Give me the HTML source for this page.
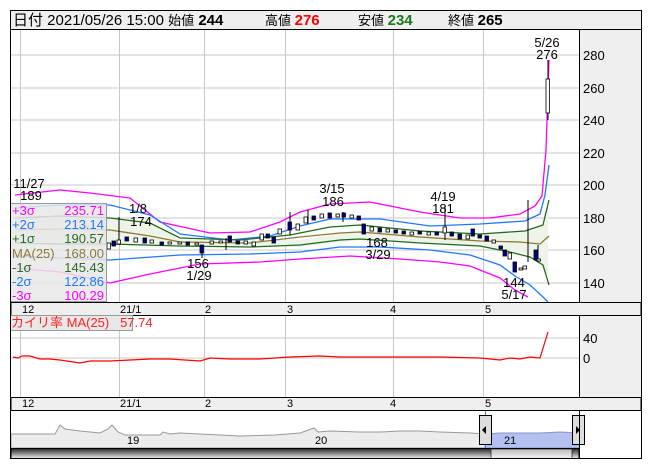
<!DOCTYPE html>
<html><head><meta charset="utf-8"><style>
body{margin:0;width:653px;height:470px;background:#fff;overflow:hidden;font-family:"Liberation Sans","Noto Sans CJK JP",sans-serif}
svg{position:absolute;left:0;top:0}
text{font-family:"Liberation Sans","Noto Sans CJK JP",sans-serif}
</style></head><body>
<svg width="653" height="470" viewBox="0 0 653 470">
<rect x="10.5" y="10.5" width="631" height="19" fill="#efefef" stroke="#000"/>
<text x="13" y="25" font-size="15" fill="#000">日付 2021/05/26 15:00 <tspan font-size="13">始値</tspan> <tspan font-weight="bold">244</tspan></text>
<text x="265" y="25" font-size="13">高値 <tspan font-weight="bold" fill="#f00" font-size="15">276</tspan></text>
<text x="358" y="25" font-size="13">安値 <tspan font-weight="bold" fill="#1a7a1a" font-size="15">234</tspan></text>
<text x="448" y="25" font-size="13">終値 <tspan font-weight="bold" font-size="15">265</tspan></text>
<rect x="579" y="29" width="62" height="381" fill="#efefef"/>
<g stroke="#c8c8c8" stroke-width="1">
<line x1="11" y1="55" x2="579" y2="55"/><line x1="11" y1="88" x2="579" y2="88"/><line x1="11" y1="120" x2="579" y2="120"/><line x1="11" y1="153" x2="579" y2="153"/><line x1="11" y1="185" x2="579" y2="185"/><line x1="11" y1="218" x2="579" y2="218"/><line x1="11" y1="250" x2="579" y2="250"/><line x1="11" y1="283" x2="579" y2="283"/>
<line x1="20.5" y1="30" x2="20.5" y2="302"/><line x1="119.5" y1="30" x2="119.5" y2="302"/><line x1="204.5" y1="30" x2="204.5" y2="302"/><line x1="285.5" y1="30" x2="285.5" y2="302"/><line x1="393.5" y1="30" x2="393.5" y2="302"/><line x1="483.5" y1="30" x2="483.5" y2="302"/>
<line x1="11" y1="338" x2="579" y2="338"/><line x1="11" y1="358" x2="579" y2="358"/>
<line x1="20.5" y1="316" x2="20.5" y2="397"/><line x1="119.5" y1="316" x2="119.5" y2="397"/><line x1="204.5" y1="316" x2="204.5" y2="397"/><line x1="285.5" y1="316" x2="285.5" y2="397"/><line x1="393.5" y1="316" x2="393.5" y2="397"/><line x1="483.5" y1="316" x2="483.5" y2="397"/>
</g>
<path d="M15,222 L60,215 110,218 150,222 180,240 300,240 360,230 420,233 480,235 525,232 545,225 548,205 L548,275 530,255 500,248 420,243 360,240 300,247 180,245 110,243 60,244 15,246Z" fill="#eef4e8"/>
<g fill="none" stroke-width="1.3">
<polyline stroke="#ff00ff" points="15,195 60,190 90,193 130,198 160,222 210,233 250,232 280,222 300,212 330,204 370,202 400,208 420,212 460,218 490,218 520,214 535,206 542,196 546,150 549,60"/>
<polyline stroke="#1e78ff" points="15,208 60,205 110,205 150,215 180,234 230,240 270,236 300,226 330,219 380,219 430,226 480,224 525,221 540,214 545,195 549,165"/>
<polyline stroke="#1f6a1f" points="15,218 60,216 110,218 150,223 180,238 240,240 290,235 330,227 360,225 420,231 480,234 525,231 543,225 549,200"/>
<polyline stroke="#8a7a3a" points="15,230 60,229 110,230 150,236 180,242 250,243 300,237 340,233 360,232 420,237 480,241 520,242 540,244 549,236"/>
<polyline stroke="#1f6a1f" points="15,243 60,244 110,244 180,246 250,247 300,245 340,240 360,239 420,243 480,246 510,252 530,257 543,265 549,285"/>
<polyline stroke="#1e78ff" points="15,256 60,258 110,260 180,255 250,254 300,252 340,247 380,247 430,250 470,255 500,265 515,276 530,285 543,297 548,302"/>
<polyline stroke="#ff00ff" points="15,268 60,272 110,283 150,274 200,264 260,262 300,259 350,256 400,259 440,262 470,266 500,278 515,290 528,297"/>
</g>
<g stroke="#000" stroke-width="1">
<path d="M119,217 V245 M290,212 V235 M226,238 V250 M445,205 V240 M528,200 V262 M308,210 V224 M548,60 V120 M538,245 V262 M343,212 V222 M202,246 V258"/>
</g>
<g stroke="#000" stroke-width="0.8">
<rect x="107" y="243" width="3.5" height="6" fill="#fff"/><rect x="112" y="241" width="3.5" height="5" fill="#00008b"/><rect x="117" y="240" width="3.5" height="4" fill="#fff"/><rect x="125" y="237" width="3.5" height="4" fill="#00008b"/><rect x="134" y="238" width="3.5" height="4" fill="#fff"/><rect x="143" y="238" width="3.5" height="5" fill="#00008b"/><rect x="150" y="240" width="3.5" height="3" fill="#fff"/><rect x="160" y="242" width="3.5" height="3" fill="#00008b"/><rect x="168" y="242" width="3.5" height="2" fill="#fff"/><rect x="178" y="242" width="3.5" height="2" fill="#fff"/><rect x="186" y="242" width="3.5" height="3" fill="#00008b"/><rect x="195" y="243" width="3.5" height="2" fill="#fff"/><rect x="200" y="245" width="3.5" height="8" fill="#00008b"/><rect x="210" y="241" width="3.5" height="3" fill="#fff"/><rect x="219" y="241" width="3.5" height="2" fill="#fff"/><rect x="228" y="236" width="3.5" height="6" fill="#00008b"/><rect x="236" y="241" width="3.5" height="3" fill="#00008b"/><rect x="244" y="241" width="3.5" height="3" fill="#fff"/><rect x="252" y="242" width="3.5" height="4" fill="#fff"/><rect x="260" y="234" width="3.5" height="6" fill="#fff"/><rect x="266" y="234" width="3.5" height="4" fill="#00008b"/><rect x="272" y="237" width="3.5" height="6" fill="#00008b"/><rect x="278" y="229" width="3.5" height="5" fill="#fff"/><rect x="288" y="222" width="3.5" height="8" fill="#00008b"/><rect x="296" y="224" width="3.5" height="6" fill="#fff"/><rect x="304" y="217" width="3.5" height="6" fill="#fff"/><rect x="312" y="216" width="3.5" height="4" fill="#00008b"/><rect x="320" y="214" width="3.5" height="4" fill="#fff"/><rect x="328" y="213" width="3.5" height="5" fill="#00008b"/><rect x="336" y="214" width="3.5" height="3" fill="#fff"/><rect x="342" y="213" width="3.5" height="4" fill="#00008b"/><rect x="350" y="215" width="3.5" height="3" fill="#fff"/><rect x="357" y="216" width="3.5" height="4" fill="#00008b"/><rect x="362" y="224" width="3.5" height="10" fill="#00008b"/><rect x="370" y="227" width="3.5" height="4" fill="#fff"/><rect x="378" y="228" width="3.5" height="4" fill="#00008b"/><rect x="386" y="229" width="3.5" height="3" fill="#fff"/><rect x="394" y="230" width="3.5" height="3" fill="#00008b"/><rect x="402" y="231" width="3.5" height="3" fill="#00008b"/><rect x="410" y="232" width="3.5" height="3" fill="#fff"/><rect x="418" y="231" width="3.5" height="3" fill="#00008b"/><rect x="427" y="232" width="3.5" height="3" fill="#fff"/><rect x="435" y="232" width="3.5" height="3" fill="#00008b"/><rect x="443" y="227" width="3.5" height="6" fill="#fff"/><rect x="450" y="232" width="3.5" height="4" fill="#00008b"/><rect x="458" y="234" width="3.5" height="5" fill="#00008b"/><rect x="466" y="235" width="3.5" height="4" fill="#fff"/><rect x="471" y="229" width="3.5" height="7" fill="#00008b"/><rect x="478" y="235" width="3.5" height="3" fill="#00008b"/><rect x="485" y="236" width="3.5" height="5" fill="#00008b"/><rect x="492" y="240" width="3.5" height="3" fill="#fff"/><rect x="499" y="246" width="3.5" height="3" fill="#00008b"/><rect x="503" y="250" width="3.5" height="6" fill="#00008b"/><rect x="508" y="253" width="3.5" height="6" fill="#fff"/><rect x="513" y="262" width="3.5" height="10" fill="#00008b"/><rect x="519" y="268" width="3.5" height="2" fill="#fff"/><rect x="523" y="266" width="3.5" height="3" fill="#fff"/><rect x="534" y="250" width="3.5" height="10" fill="#00008b"/><rect x="537" y="259" width="3.5" height="2" fill="#fff"/>
<rect x="546" y="79" width="3.5" height="34" fill="#fff"/>
</g>
<g font-size="13" fill="#000" text-anchor="middle">
<text x="29" y="188">11/27</text><text x="31" y="200">189</text>
<text x="138" y="213">1/8</text><text x="141" y="226">174</text>
<text x="198" y="268">156</text><text x="199" y="280">1/29</text>
<text x="332" y="193">3/15</text><text x="333" y="206">186</text>
<text x="377" y="247">168</text><text x="378" y="259">3/29</text>
<text x="443" y="201">4/19</text><text x="443" y="213">181</text>
<text x="514" y="287">144</text><text x="514" y="299">5/17</text>
<text x="547" y="47">5/26</text><text x="547" y="59">276</text>
</g>
<g font-size="13" fill="#000">
<text x="583" y="60">280</text><text x="583" y="93">260</text><text x="583" y="125">240</text><text x="583" y="158">220</text><text x="583" y="190">200</text><text x="583" y="223">180</text><text x="583" y="255">160</text><text x="583" y="288">140</text>
<text x="583" y="343">40</text><text x="583" y="363">0</text>
</g>
<rect x="10.5" y="203.5" width="96" height="98" fill="#e8e8e8" fill-opacity="0.85" stroke="#999"/>
<g font-size="13">
<text x="12" y="215" fill="#ff00ff">+3σ</text><text x="104" y="215" fill="#ff00ff" text-anchor="end">235.71</text>
<text x="12" y="229" fill="#1e78ff">+2σ</text><text x="104" y="229" fill="#1e78ff" text-anchor="end">213.14</text>
<text x="12" y="243" fill="#2a6a2a">+1σ</text><text x="104" y="243" fill="#2a6a2a" text-anchor="end">190.57</text>
<text x="12" y="258" fill="#8a7a3a">MA(25)</text><text x="104" y="258" fill="#8a7a3a" text-anchor="end">168.00</text>
<text x="12" y="272" fill="#2a6a2a">-1σ</text><text x="104" y="272" fill="#2a6a2a" text-anchor="end">145.43</text>
<text x="12" y="286" fill="#1e78ff">-2σ</text><text x="104" y="286" fill="#1e78ff" text-anchor="end">122.86</text>
<text x="12" y="300" fill="#ff00ff">-3σ</text><text x="104" y="300" fill="#ff00ff" text-anchor="end">100.29</text>
</g>
<rect x="11" y="302.5" width="630" height="13" fill="#efefef" stroke="#000"/>
<g font-size="11" fill="#000"><text x="22" y="313">12</text><text x="120" y="313">21/1</text><text x="205" y="313">2</text><text x="287" y="313">3</text><text x="390" y="313">4</text><text x="485" y="313">5</text></g>
<rect x="10.5" y="315.5" width="122" height="15" fill="#e8e8e8" stroke="#999"/>
<text x="11" y="327" font-size="13" fill="#ff2020">カイリ率 MA(25)&#160;&#160; 57.74</text>
<polyline fill="none" stroke="#ff0000" stroke-width="1.2" points="13,357 18,358 22,356 30,356 40,359 50,359 60,360 80,363 90,361 110,361 130,360 150,359 170,359 200,361 210,358 230,359 260,359 290,357 320,356 340,357 360,357 400,357 440,357 480,358 490,359 500,360 510,358 520,359 530,357 540,358 548,332"/>
<rect x="11" y="397.5" width="630" height="13" fill="#efefef" stroke="#000"/>
<g font-size="11" fill="#000"><text x="22" y="407">12</text><text x="120" y="407">21/1</text><text x="205" y="407">2</text><text x="287" y="407">3</text><text x="390" y="407">4</text><text x="485" y="407">5</text></g>
<rect x="11" y="411" width="568" height="37" fill="#fff"/>
<path d="M11,434 L55,434 60,425 65,429 80,431 100,433 108,429 112,425 118,432 125,435 160,435 163,432 170,434 180,433 240,436 275,435 300,433 314,428 318,432 330,431 360,432 380,432 400,431 420,431 440,432 470,433 485,434 L485,448 11,448Z" fill="#ececec" stroke="#999"/>
<path d="M485,434 L500,433 520,433 540,433 560,432 579,433 L579,448 485,448Z" fill="#b4c0f0" stroke="#8a96c8"/>
<g font-size="11" fill="#000"><text x="127" y="444">19</text><text x="315" y="444">20</text><text x="504" y="444">21</text></g>
<line x1="485.5" y1="411" x2="485.5" y2="448" stroke="#2090d0"/>
<line x1="579.5" y1="411" x2="579.5" y2="448" stroke="#2090d0"/>
<rect x="479.5" y="415.5" width="12" height="29" fill="#ddd" stroke="#000"/><path d="M482,430 l4,-4 v8z" fill="#000"/>
<rect x="572.5" y="415.5" width="12" height="29" fill="#ddd" stroke="#000"/><path d="M580,430 l-4,-4 v8z" fill="#000"/>
<defs><linearGradient id="g" x1="0" y1="0" x2="0" y2="1"><stop offset="0" stop-color="#222"/><stop offset="1" stop-color="#eee"/></linearGradient>
<linearGradient id="h" x1="0" y1="0" x2="0" y2="1"><stop offset="0" stop-color="#bbb"/><stop offset="1" stop-color="#f4f4f4"/></linearGradient></defs>
<rect x="11" y="448.5" width="568" height="10" fill="url(#g)" stroke="#000"/>
<rect x="491" y="449" width="81" height="9.5" fill="url(#h)" stroke="#000" stroke-width="0.6"/>
<g fill="none" stroke="#000">
<rect x="10.5" y="10.5" width="631" height="448"/>
<line x1="579.5" y1="29" x2="579.5" y2="302"/><line x1="579.5" y1="316" x2="579.5" y2="397"/><line x1="579.5" y1="411" x2="579.5" y2="459"/>
<line x1="10" y1="29.5" x2="642" y2="29.5"/>
</g>
</svg>
</body></html>
